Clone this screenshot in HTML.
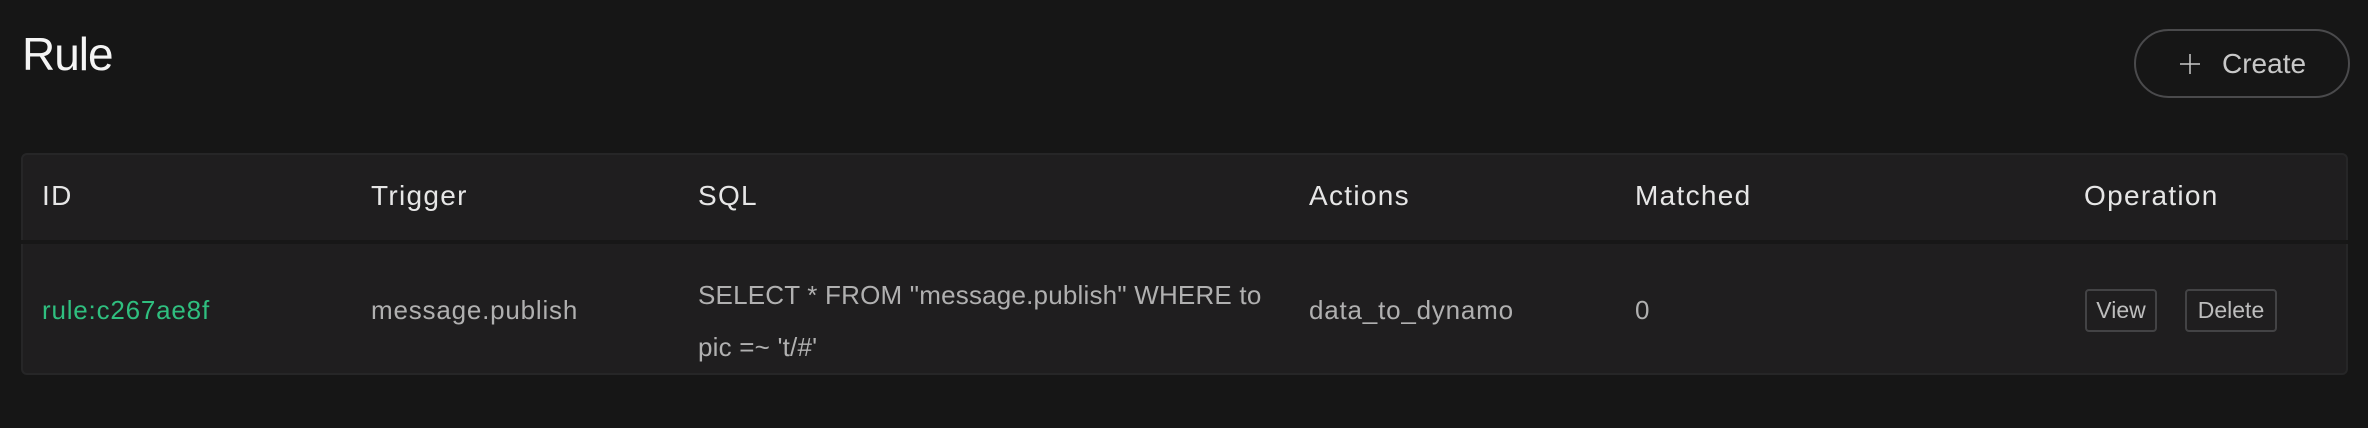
<!DOCTYPE html>
<html><head><meta charset="utf-8"><style>
*{margin:0;padding:0;box-sizing:border-box}
body{width:2368px;height:428px;background:#161616;font-family:"Liberation Sans",sans-serif;position:relative;overflow:hidden}
.t{position:absolute;white-space:nowrap}
h1{position:absolute;left:22px;top:26px;font-size:46px;font-weight:normal;color:#f4f4f4;line-height:56px;letter-spacing:-1px}
.create{position:absolute;left:2134px;top:29px;width:216px;height:69px;border:2px solid #4a4a4c;border-radius:35px;color:#c8c8c8;font-size:28px;line-height:65px}
.create svg{position:absolute;left:44px;top:23px}
.card{position:absolute;left:21px;top:153px;width:2327px;height:222px;background:#1f1e1f;border:2px solid #262627;border-radius:6px}
.sep{position:absolute;left:21px;top:240px;width:2327px;height:4px;background:#171717}
.h{color:#e6e6e6;font-size:28px;top:180px;letter-spacing:1.3px}
.b{color:#b0b0b0;font-size:26px;letter-spacing:0.8px}
.btn{position:absolute;top:289px;height:43px;border:2px solid #434345;border-radius:4px;color:#bdbdbd;font-size:23px;line-height:39px;text-align:center}
</style></head><body>
<h1>Rule</h1>
<div class="create"><svg width="20" height="20" viewBox="0 0 20 20"><path d="M10 0V20M0 10H20" stroke="#c8c8c8" stroke-width="1.5"/></svg><span style="position:absolute;left:86px">Create</span></div>
<div class="card"></div>
<div class="sep"></div>
<div class="t h" style="left:42px">ID</div>
<div class="t h" style="left:371px">Trigger</div>
<div class="t h" style="left:698px">SQL</div>
<div class="t h" style="left:1309px">Actions</div>
<div class="t h" style="left:1635px">Matched</div>
<div class="t h" style="left:2084px">Operation</div>
<div class="t b" style="left:42px;top:295px;color:#2fbf7f">rule:c267ae8f</div>
<div class="t b" style="left:371px;top:295px">message.publish</div>
<div class="t b" style="left:698px;top:269px;line-height:52px;letter-spacing:0.2px">SELECT * FROM "message.publish" WHERE to<br>pic =~ 't/#'</div>
<div class="t b" style="left:1309px;top:295px">data_to_dynamo</div>
<div class="t b" style="left:1635px;top:295px">0</div>
<div class="btn" style="left:2085px;width:72px">View</div>
<div class="btn" style="left:2185px;width:92px">Delete</div>
</body></html>
